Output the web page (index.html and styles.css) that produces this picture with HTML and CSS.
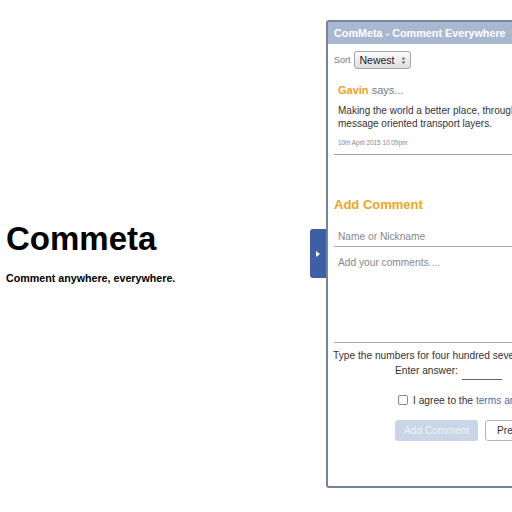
FILE: index.html
```html
<!DOCTYPE html>
<html>
<head>
<meta charset="utf-8">
<title>Commeta</title>
<link rel="stylesheet" href="styles.css">
</head>
<body>
<div class="page">
  <section class="hero">
    <h1 class="hero-title">Commeta</h1>
    <p class="hero-sub">Comment anywhere, everywhere.</p>
  </section>
  <div class="tab">
    <svg width="6" height="8" viewBox="0 0 6 8"><path d="M1 1 L5 4 L1 7 Z" fill="#fff"/></svg>
  </div>
  <aside class="panel">
    <div class="panel-head">ComMeta - Comment Everywhere</div>
    <div class="sort-row">
      <span class="sort-label">Sort</span>
      <span class="select">Newest
        <svg class="select-arrows" width="5" height="9" viewBox="0 0 5 9"><path d="M0.5 3.5 L2.5 1 L4.5 3.5 Z M0.5 5.5 L2.5 8 L4.5 5.5 Z" fill="#666"/></svg>
      </span>
    </div>
    <div class="comment">
      <div class="comment-head"><span class="author">Gavin</span> says...</div>
      <p class="comment-text">Making the world a better place, through minimal message oriented transport layers.</p>
      <div class="comment-date">10th April 2015 10:09pm</div>
    </div>
    <div class="form">
      <h2 class="form-title">Add Comment</h2>
      <div class="field name-field">Name or Nickname</div>
      <div class="field text-field">Add your comments....</div>
      <p class="captcha">Type the numbers for four hundred seventy-three:</p>
      <div class="answer-row">
        <span>Enter answer:</span>
        <span class="answer-input"></span>
      </div>
      <label class="agree-row">
        <span class="checkbox"></span>
        <span>I agree to the <span class="link">terms and conditions</span></span>
      </label>
      <div class="btn-row">
        <span class="btn btn-primary">Add Comment</span>
        <span class="btn btn-secondary">Preview</span>
      </div>
    </div>
  </aside>
</div>
</body>
</html>
```
FILE: styles.css
```css
html, body {
  margin: 0;
  padding: 0;
  overflow: hidden;
  background: #fff;
}
body {
  font-family: "Liberation Sans", Arial, sans-serif;
  color: #222;
}
.page {
  display: flex;
  align-items: flex-start;
  width: 700px;
  height: 512px;
}
.hero {
  width: 304px;
  padding-left: 6px;
  margin-top: 221px;
  flex-shrink: 0;
}
.hero-title {
  margin: 0;
  font-size: 33px;
  line-height: 36px;
  font-weight: bold;
  color: #000;
}
.hero-sub {
  margin: 15px 0 0;
  font-size: 10.7px;
  line-height: 13px;
  font-weight: bold;
  color: #000;
}
.tab {
  width: 16px;
  height: 49px;
  margin-top: 229px;
  background: #3e5fa6;
  border-radius: 3px 0 0 3px;
  display: flex;
  align-items: center;
  justify-content: center;
  flex-shrink: 0;
}
.panel {
  width: 260px;
  height: 468px;
  margin-top: 20px;
  box-sizing: border-box;
  border: 2px solid #74849c;
  border-radius: 3px;
  flex-shrink: 0;
  background: #fff;
}
.panel-head {
  height: 22px;
  line-height: 22px;
  background: #a9b8d0;
  color: #fff;
  font-size: 10.8px;
  font-weight: bold;
  padding-left: 6px;
}
.sort-row {
  display: flex;
  align-items: center;
  gap: 3px;
  margin: 7px 0 0 6px;
  height: 18px;
}
.sort-label {
  font-size: 9px;
  color: #777;
}
.select {
  display: inline-flex;
  align-items: center;
  gap: 6px;
  box-sizing: border-box;
  height: 18px;
  padding: 0 4px 0 5px;
  border: 1px solid #a6a6a6;
  border-radius: 3px;
  background: linear-gradient(#fbfbfb, #dedede);
  font-size: 10.5px;
  color: #222;
}
.comment {
  margin: 14px 6px 0;
  padding: 0 4px 7px;
  border-bottom: 1px solid #a0a0a0;
}
.comment-head {
  font-size: 11px;
  line-height: 14px;
  color: #777;
}
.author {
  color: #e8a41f;
  font-weight: bold;
}
.comment-text {
  margin: 7px 0 0;
  font-size: 10px;
  line-height: 13px;
  color: #333;
}
.comment-date {
  margin-top: 9px;
  font-size: 6.4px;
  line-height: 8px;
  color: #888;
}
.form {
  padding: 0 6px;
}
.form-title {
  margin: 42px 0 0;
  font-size: 13px;
  line-height: 16px;
  font-weight: bold;
  color: #eaa724;
}
.field {
  font-size: 10.2px;
  color: #888;
  padding-left: 4px;
  border-bottom: 1px solid #a8a8a8;
  box-sizing: border-box;
}
.name-field {
  margin-top: 14px;
  height: 20px;
  line-height: 19px;
}
.text-field {
  height: 96px;
  padding-top: 9px;
  line-height: 13px;
}
.captcha {
  margin: 6px 0 0 -1px;
  font-size: 10.2px;
  line-height: 13px;
  color: #333;
  white-space: nowrap;
}
.answer-row {
  display: flex;
  align-items: flex-start;
  gap: 4px;
  margin: 2px 0 0 61px;
  font-size: 10.2px;
  line-height: 13px;
  color: #333;
}
.answer-input {
  width: 40px;
  height: 16px;
  box-sizing: border-box;
  border-bottom: 1px solid #666;
}
.agree-row {
  display: flex;
  align-items: center;
  gap: 5px;
  margin: 13px 0 0 64px;
  height: 14px;
  font-size: 10.2px;
  color: #333;
  white-space: nowrap;
}
.checkbox {
  width: 8px;
  height: 8px;
  border: 1px solid #8a8a8a;
  border-radius: 2px;
  background: #fff;
  flex-shrink: 0;
}
.link {
  color: #4b6fa8;
}
.btn-row {
  display: flex;
  gap: 7px;
  margin: 13px 0 0 61px;
}
.btn {
  height: 21px;
  line-height: 21px;
  box-sizing: border-box;
  border-radius: 3px;
  font-size: 10.2px;
  padding: 0 11px;
  white-space: nowrap;
}
.btn-primary {
  width: 83px;
  text-align: center;
  padding: 0;
  background: #c8d6e5;
  color: #eef3f8;
}
.btn-secondary {
  background: #fff;
  border: 1px solid #b5b5b5;
  line-height: 19px;
  color: #333;
}
```
